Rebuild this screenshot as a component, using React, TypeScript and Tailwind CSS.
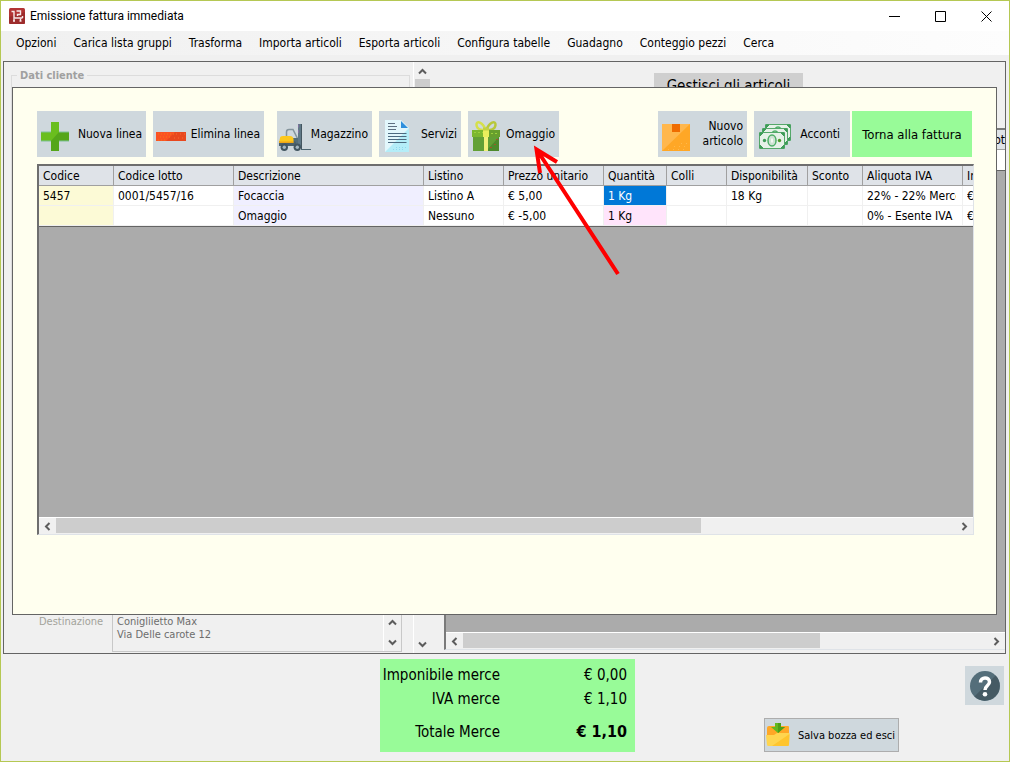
import type { ReactNode } from "react";
import clsx from "clsx";

const MENU = [
  "Opzioni",
  "Carica lista gruppi",
  "Trasforma",
  "Importa articoli",
  "Esporta articoli",
  "Configura tabelle",
  "Guadagno",
  "Conteggio pezzi",
  "Cerca",
];

const COLUMNS = [
  { title: "Codice", width: "w-[75px]" },
  { title: "Codice lotto", width: "w-[120px]" },
  { title: "Descrizione", width: "w-[190px]" },
  { title: "Listino", width: "w-[80px]" },
  { title: "Prezzo unitario", width: "w-[100px]" },
  { title: "Quantità", width: "w-[63px]" },
  { title: "Colli", width: "w-[60px]" },
  { title: "Disponibilità", width: "w-[81px]" },
  { title: "Sconto", width: "w-[55px]" },
  { title: "Aliquota IVA", width: "w-[100px]" },
  { title: "Importo", width: "w-[100px]" },
];

const ROWS = [
  ["5457", "0001/5457/16", "Focaccia", "Listino A", "€ 5,00", "1 Kg", "", "18 Kg", "", "22% - 22% Merce", "€ 5,00"],
  ["", "", "Omaggio", "Nessuno", "€ -5,00", "1 Kg", "", "", "", "0% - Esente IVA", "€ -5,00"],
];

const TOTALS = [
  { label: "Imponibile merce", value: "€ 0,00" },
  { label: "IVA merce", value: "€ 1,10" },
];

const CHEVRONS = {
  up: "M1 6.5 4.5 3 8 6.5",
  down: "M1 2.5 4.5 6 8 2.5",
  left: "M6.5 1 3 4.5 6.5 8",
  right: "M2.5 1 6 4.5 2.5 8",
};

function Chevron({ dir }: { dir: keyof typeof CHEVRONS }) {
  return (
    <svg viewBox="0 0 9 9" className="size-[9px]" fill="none" stroke="#5c5c5c" strokeWidth="2">
      <path d={CHEVRONS[dir]} />
    </svg>
  );
}

function HScroll({ thumb }: { thumb: number }) {
  return (
    <div className="flex h-[17px] shrink-0 border-t border-white bg-[#f0f0f0]">
      <button type="button" aria-label="Scorri a sinistra" className="flex w-[17px] items-center justify-center">
        <Chevron dir="left" />
      </button>
      <div className="flex-1">
        <div className="h-[15px] bg-[#cdcdcd]" style={{ width: `${thumb}%` }} />
      </div>
      <button type="button" aria-label="Scorri a destra" className="flex w-[17px] items-center justify-center">
        <Chevron dir="right" />
      </button>
    </div>
  );
}

function ToolButton({ icon, width, children }: { icon: ReactNode; width: string; children: ReactNode }) {
  return (
    <button
      type="button"
      className={clsx("flex h-[46px] items-center justify-between bg-[#cfd8dd] pr-1 pl-0.5 text-right leading-[15px]", width)}
    >
      <svg viewBox="0 0 28 32" className="mt-1 h-8 w-7 shrink-0 overflow-visible" fill="none">
        {icon}
      </svg>
      <span className="whitespace-nowrap">{children}</span>
    </button>
  );
}

const plusIcon = (
  <>
    <path d="M12 2h8v10h10v9H20v10h-8V21H2v-9h10z" fill="#6abe1e" />
    <path d="M20 12h10v9H20v10h-8V21z" fill="#55a61a" />
    <path d="M2 12h10M20 12h10M2 21h10M20 21h10" stroke="#7fc096" />
  </>
);

const minusIcon = (
  <>
    <path d="M1 12h30v9H1z" fill="#fb5222" />
    <path d="M20 12h11v9H11z" fill="#e8481e" />
    <path d="M3 14h16M5 17h12M3 20h9" stroke="#f47a12" strokeDasharray="1 2" />
    <path d="M21 14h9M19 18h11" stroke="#fa6a30" strokeDasharray="1 3" />
  </>
);

const forkliftIcon = (
  <>
    <path d="M7.500 16v-4q0-2.500 2.500-2.500h4l4.500 9" stroke="#84949c" strokeWidth="1.500" />
    <path d="M14 18h5v7h-5z" fill="#546e7a" />
    <path d="M0 21h15l2 1v4H0z" fill="#4b616c" />
    <path d="M1 18q0-2 3-2h7q3 0 3.500 3v3.500H0z" fill="#fdc81c" />
    <path d="M0 21.500h14.500v1.500H0z" fill="#f0a818" />
    <path d="M19 4h3v24h-3z" fill="#607987" />
    <path d="M22 4h1v25.500h-1z" fill="#445660" />
    <path d="M19.500 4.500v3M19.500 10v3" stroke="#8270a0" />
    <path d="M22 29.500h10" stroke="#4c6470" />
    <circle cx="5.300" cy="27.300" r="3.700" fill="#425661" />
    <circle cx="5.300" cy="27.300" r="1.700" fill="#a3b6c0" />
    <circle cx="18.300" cy="27.300" r="3.700" fill="#425661" />
    <circle cx="18.300" cy="27.300" r="1.700" fill="#a3b6c0" />
  </>
);

const documentIcon = (
  <>
    <path d="M4 0h16l8 8v24H4z" fill="#e2f7fc" />
    <path d="M28 8v24H4z" fill="#b4edf8" />
    <path d="M20 1v7h7z" fill="#2f8fdc" />
    <path d="M7 3.500h7M7 6.500h9M7 9.500h8" stroke="#5f7182" />
    <path d="M7 13.500h18.500M7 16.500h18.500M7 19.500h18.500M7 22.500h18.500" stroke="#4c6a80" />
    <path d="M15 27.500h11M12 29.500h12" stroke="#8fd8ee" strokeDasharray="1 2" />
  </>
);

const giftIcon = (
  <>
    <path d="M15.500 10C13 2 6 0 6.500 5s5 5 9 5" stroke="#d5e04a" strokeWidth="2.500" />
    <path d="M16.500 10C19 2 26 0 25.500 5s-5 5-9 5" stroke="#b8c83a" strokeWidth="2.500" />
    <path d="M2 10h28v7H2z" fill="#7cb82f" />
    <path d="M16 10h14v7H16z" fill="#679f2d" />
    <path d="M3 17h26v14H3z" fill="#62a035" />
    <path d="M29 17v14H16z" fill="#4d8a2b" />
    <path d="M4 12.500h9M21 13.500h8" stroke="#9cd03c" strokeDasharray="2 2" />
    <path d="M20 27.500h2M24 24.500h2M26 19.500h2" stroke="#a05828" />
    <path d="M13 9h6v8h-6z" fill="#e9ee5c" />
    <path d="M14 17h4v14h-4z" fill="#f2f07a" />
    <path d="M13 7.500h6v3h-6z" fill="#c3d144" />
  </>
);

const boxIcon = (
  <>
    <path d="M2 4h28v27H2z" fill="#ffa726" />
    <path d="M2 4h28L2 31z" fill="#ffb74d" />
    <path d="M12 4h8v8h-8z" fill="#ef6c00" />
    <path d="M21 23.500h8M14 26.500h14M8 29.500h18" stroke="#ffb84a" strokeDasharray="1 4" />
  </>
);

function Banknote({ x, y }: { x: number; y: number }) {
  return (
    <g transform={`translate(${x} ${y})`}>
      <path d="M.5.5h25v16H.5z" fill="#e6f1e8" stroke="#55a86a" />
      <path d="M1 4V1h3zM22 1h3v3zM1 13v3h3zM22 16h3v-3z" fill="#3f9c58" stroke="#3f9c58" />
      <ellipse cx="13" cy="8.500" rx="4" ry="5.500" fill="#cfe3d4" stroke="#4cae66" strokeWidth="1.500" />
      <path d="M12 6.500h2v4h-2z" fill="#f2f8f2" />
      <circle cx="5.500" cy="8.500" r="1.700" fill="#3f9c58" />
      <circle cx="20.500" cy="8.500" r="1.700" fill="#4c9a2a" />
    </g>
  );
}

const moneyIcon = (
  <>
    <Banknote x={9} y={4} />
    <Banknote x={6} y={8} />
    <Banknote x={3} y={12} />
  </>
);

function TitleBar() {
  return (
    <header className="flex h-[30px] items-center bg-white pl-2">
      <svg viewBox="0 0 16 16" className="size-4" fill="none">
        <rect width="16" height="16" rx="1.500" fill="#b23434" />
        <path d="M0 9 16 4v10.500q0 1.500-1.500 1.500h-13Q0 16 0 14.500z" fill="#9d2c2c" />
        <path d="M2.500 3.500H5V10h8.500M7.500 3h4v3.500h-3V8M13.500 8v2" stroke="#f7eaea" strokeWidth="1.400" />
        <path d="M4 13h2M10.500 13h2M5 10.500V13M11.500 10.500V13" stroke="#f7eaea" strokeWidth="1.400" />
      </svg>
      <h1 className="flex-1 pl-[5px] font-['Roboto','Noto_Sans',sans-serif] text-[12px]">Emissione fattura immediata</h1>
      <div className="flex h-full">
        <button type="button" aria-label="Riduci" className="flex w-[46px] items-center justify-center">
          <svg viewBox="0 0 11 11" className="size-[11px]" stroke="#000">
            <path d="M0 5.500h11" />
          </svg>
        </button>
        <button type="button" aria-label="Ingrandisci" className="flex w-[46px] items-center justify-center">
          <svg viewBox="0 0 11 11" className="size-[11px]" fill="none" stroke="#000">
            <path d="M.5.5h10v10H.5z" />
          </svg>
        </button>
        <button type="button" aria-label="Chiudi" className="flex w-[46px] items-center justify-center">
          <svg viewBox="0 0 11 11" className="size-[11px]" stroke="#000">
            <path d="m.5.5 10 10M10.500.5l-10 10" />
          </svg>
        </button>
      </div>
    </header>
  );
}

function CustomerPanel() {
  return (
    <div className="flex w-[409px] flex-col pt-[7px] pl-[7px] text-[11px] leading-[13px]">
      <fieldset className="mr-[3px] flex-1 border border-[#dcdcdc] pl-[5px]">
        <legend className="px-[3px] font-bold text-[#a0a0a0]">Dati cliente</legend>
      </fieldset>
      <div className="mt-5 mb-px flex h-[42px] pl-7">
        <label htmlFor="destinazione" className="w-[73px] pt-[5px] text-[#a3a39b]">
          Destinazione
        </label>
        <div className="flex w-[290px] border border-[#c8c8c8]">
          <textarea
            id="destinazione"
            readOnly
            className="flex-1 resize-none overflow-hidden px-1 pt-1 text-[#6d6d6d] outline-none"
            defaultValue={"Conigliietto Max\nVia Delle carote 12"}
          />
          <div className="flex w-[18px] flex-col items-center justify-between border-l border-white pt-[7px] pb-1">
            <Chevron dir="up" />
            <Chevron dir="down" />
          </div>
        </div>
      </div>
    </div>
  );
}

function ArticlesPanel() {
  return (
    <div className="ml-3.5 flex flex-1 flex-col pb-[3px]">
      <div className="flex h-[66px] shrink-0 justify-center pt-[11px] pl-2">
        <button type="button" className="h-[26px] w-[149px] bg-[#cfcfcf] text-[15px] whitespace-nowrap">
          Gestisci gli articoli
        </button>
      </div>
      <div className="flex flex-1 flex-col border-t-2 border-b border-l-2 border-t-[#7a7a7a] border-b-[#dfe3e8] border-l-[#7a7a7a] bg-[#ababab]">
        <div className="h-5 overflow-hidden border-b border-[#a0a0a0] bg-[#dfe3e8] text-right leading-5">Tot</div>
        <div className="h-[21px] border-b border-[#646464] bg-white" />
        <div className="flex-1" />
        <HScroll thumb={68} />
      </div>
    </div>
  );
}

function LinesGrid() {
  return (
    <div className="flex flex-1 flex-col overflow-hidden border-t-2 border-r border-b border-l-2 border-t-[#6e6e6e] border-r-[#dfe3e8] border-b-[#dfe3e8] border-l-[#6e6e6e] bg-[#ababab]">
      <div className="flex-1 overflow-hidden">
        <table className="w-[1024px] table-fixed border-separate border-spacing-0 border-b border-[#646464] text-left">
          <thead>
            <tr className="h-5">
              {COLUMNS.map((col) => (
                <th
                  key={col.title}
                  className={clsx(
                    "border-r border-b border-[#a0a0a0] bg-[#dfe3e8] px-1 pt-0.5 leading-[17px] font-normal whitespace-nowrap",
                    col.width,
                  )}
                >
                  {col.title}
                </th>
              ))}
            </tr>
          </thead>
          <tbody>
            {ROWS.map((row, r) => (
              <tr key={r} className="h-5">
                {row.map((cell, c) => (
                  <td
                    key={c}
                    className={clsx(
                      "border-r border-b border-[#f0f0f0] pt-0.5 pr-1.5 pl-1 leading-[17px]",
                      c === 0 && "bg-[#fcfad6]",
                      c === 2 && "bg-[#f0efff]",
                      c === 5 && (r === 0 ? "bg-[#0078d7] text-white" : "bg-[#ffe4fb]"),
                      c !== 0 && c !== 2 && c !== 5 && "bg-white",
                    )}
                  >
                    <div className="overflow-hidden whitespace-nowrap">{cell}</div>
                  </td>
                ))}
              </tr>
            ))}
          </tbody>
        </table>
      </div>
      <HScroll thumb={71.7} />
    </div>
  );
}

function LinesDialog() {
  return (
    <section className="absolute inset-x-2 top-[25px] bottom-[38px] flex flex-col border border-[#646464] bg-[#ffffef] pt-[23px] pr-[22px] pb-[79px] pl-6">
      <div className="mb-[7px] flex justify-between pr-0.5">
        <div className="flex gap-[7px]">
          <ToolButton icon={plusIcon} width="w-[109px]">Nuova linea</ToolButton>
          <ToolButton icon={minusIcon} width="w-[111px]">Elimina linea</ToolButton>
          <div className="ml-1.5 flex gap-[7px]">
            <ToolButton icon={forkliftIcon} width="w-[95px]">Magazzino</ToolButton>
            <ToolButton icon={documentIcon} width="w-[82px]">Servizi</ToolButton>
            <ToolButton icon={giftIcon} width="w-[91px]">Omaggio</ToolButton>
          </div>
        </div>
        <div className="flex">
          <ToolButton icon={boxIcon} width="w-[89px]">
            Nuovo
            <br />
            articolo
          </ToolButton>
          <div className="ml-[7px] flex gap-0.5">
            <ToolButton icon={moneyIcon} width="w-24">
              <span className="pr-1.5">Acconti</span>
            </ToolButton>
            <button type="button" className="h-[46px] w-[120px] bg-[#98fb98] text-[13px] whitespace-nowrap">
              Torna alla fattura
            </button>
          </div>
        </div>
      </div>
      <LinesGrid />
      {/* arrow pointing at "Omaggio" */}
      <svg
        viewBox="0 0 100 140"
        className="pointer-events-none absolute top-[52px] left-[507px] h-[140px] w-[100px]"
        fill="none"
        stroke="#fe0000"
        strokeWidth="4"
      >
        <path d="M98 134 17 10M20 33 16.500 9.500 37 22" />
      </svg>
    </section>
  );
}

function Footer() {
  return (
    <footer className="grid grid-cols-[1fr_auto_1fr] pt-[5px] pb-[9px] pl-[5px]">
      <div />
      <dl className="grid h-[93px] w-[255px] grid-cols-[120px_1fr] content-start bg-[#98fb98] pt-1 pr-2 text-right text-[15px] leading-6">
        {TOTALS.map((t) => (
          <div key={t.label} className="contents">
            <dt>{t.label}</dt>
            <dd>{t.value}</dd>
          </div>
        ))}
        <dt className="pt-[9px]">Totale Merce</dt>
        <dd className="pt-[9px] text-[16px] font-bold">€ 1,10</dd>
      </dl>
      <div className="flex flex-col items-end justify-between pt-[7px] pr-[5px]">
        <button type="button" aria-label="Aiuto" className="flex size-[39px] items-center justify-center bg-[#cfd8dd]">
          <svg viewBox="0 0 30 30" className="size-[30px]" fill="none">
            <circle cx="15" cy="15" r="15" fill="#546e7a" />
            <path d="M25.600 4.400A15 15 0 0 1 4.400 25.600z" fill="#455a64" />
            <path d="M10.500 11.500C10.500 5.500 19.500 5.500 19.500 11 19.500 14.500 15 14.500 15 19" stroke="#fff" strokeWidth="3.500" />
            <circle cx="15" cy="23.300" r="2.300" fill="#fff" />
          </svg>
        </button>
        <button
          type="button"
          className="mr-[105px] flex h-[34px] w-[135px] items-center justify-between border border-[#adadad] bg-[#cfd8dd] pr-[3px] pl-px text-[11px] whitespace-nowrap"
        >
          <svg viewBox="0 0 24 24" className="size-6" fill="none">
            <path d="M1 5q0-2 2-2h19q1 0 1 1v11H1z" fill="#ffa726" />
            <path d="M9 0h6v4h4l-7 6-7-6h4z" fill="#63b820" />
            <path d="M12 0h3v4h4l-7 6z" fill="#4c9f18" />
            <path d="M0 12h8l3-2h12.500L23 21.500q0 1.500-1.500 1.500h-19Q1 23 1 21.500z" fill="#ffd54f" />
            <path d="M23.500 11 23 21.500q0 1.500-1.500 1.500H6z" fill="#ffc52e" />
          </svg>
          Salva bozza ed esci
        </button>
      </div>
    </footer>
  );
}

export default function App() {
  return (
    <div className="flex min-h-screen flex-col border border-[#b5c853] bg-[#f0f0f0] font-['DejaVu_Sans_Condensed','Noto_Sans',sans-serif] text-[12px] leading-[15px] text-black">
      <TitleBar />
      <nav className="flex h-6 items-center gap-[17px] bg-linear-to-r from-[#f0f0f0] to-[#fdfdfd] pt-px pl-[15px]">
        {MENU.map((item) => (
          <button key={item} type="button" className="whitespace-nowrap">
            {item}
          </button>
        ))}
      </nav>
      <main className="relative mt-1.5 mr-[3px] ml-0.5 flex flex-1 overflow-hidden border border-[#646464]">
        <CustomerPanel />
        <div className="flex w-[17px] flex-col items-center border-l border-white pt-[5px] pb-1">
          <Chevron dir="up" />
          <div className="mt-[3px] mb-12 w-[15px] flex-1 bg-[#cdcdcd]" />
          <Chevron dir="down" />
        </div>
        <ArticlesPanel />
        <LinesDialog />
      </main>
      <Footer />
    </div>
  );
}
